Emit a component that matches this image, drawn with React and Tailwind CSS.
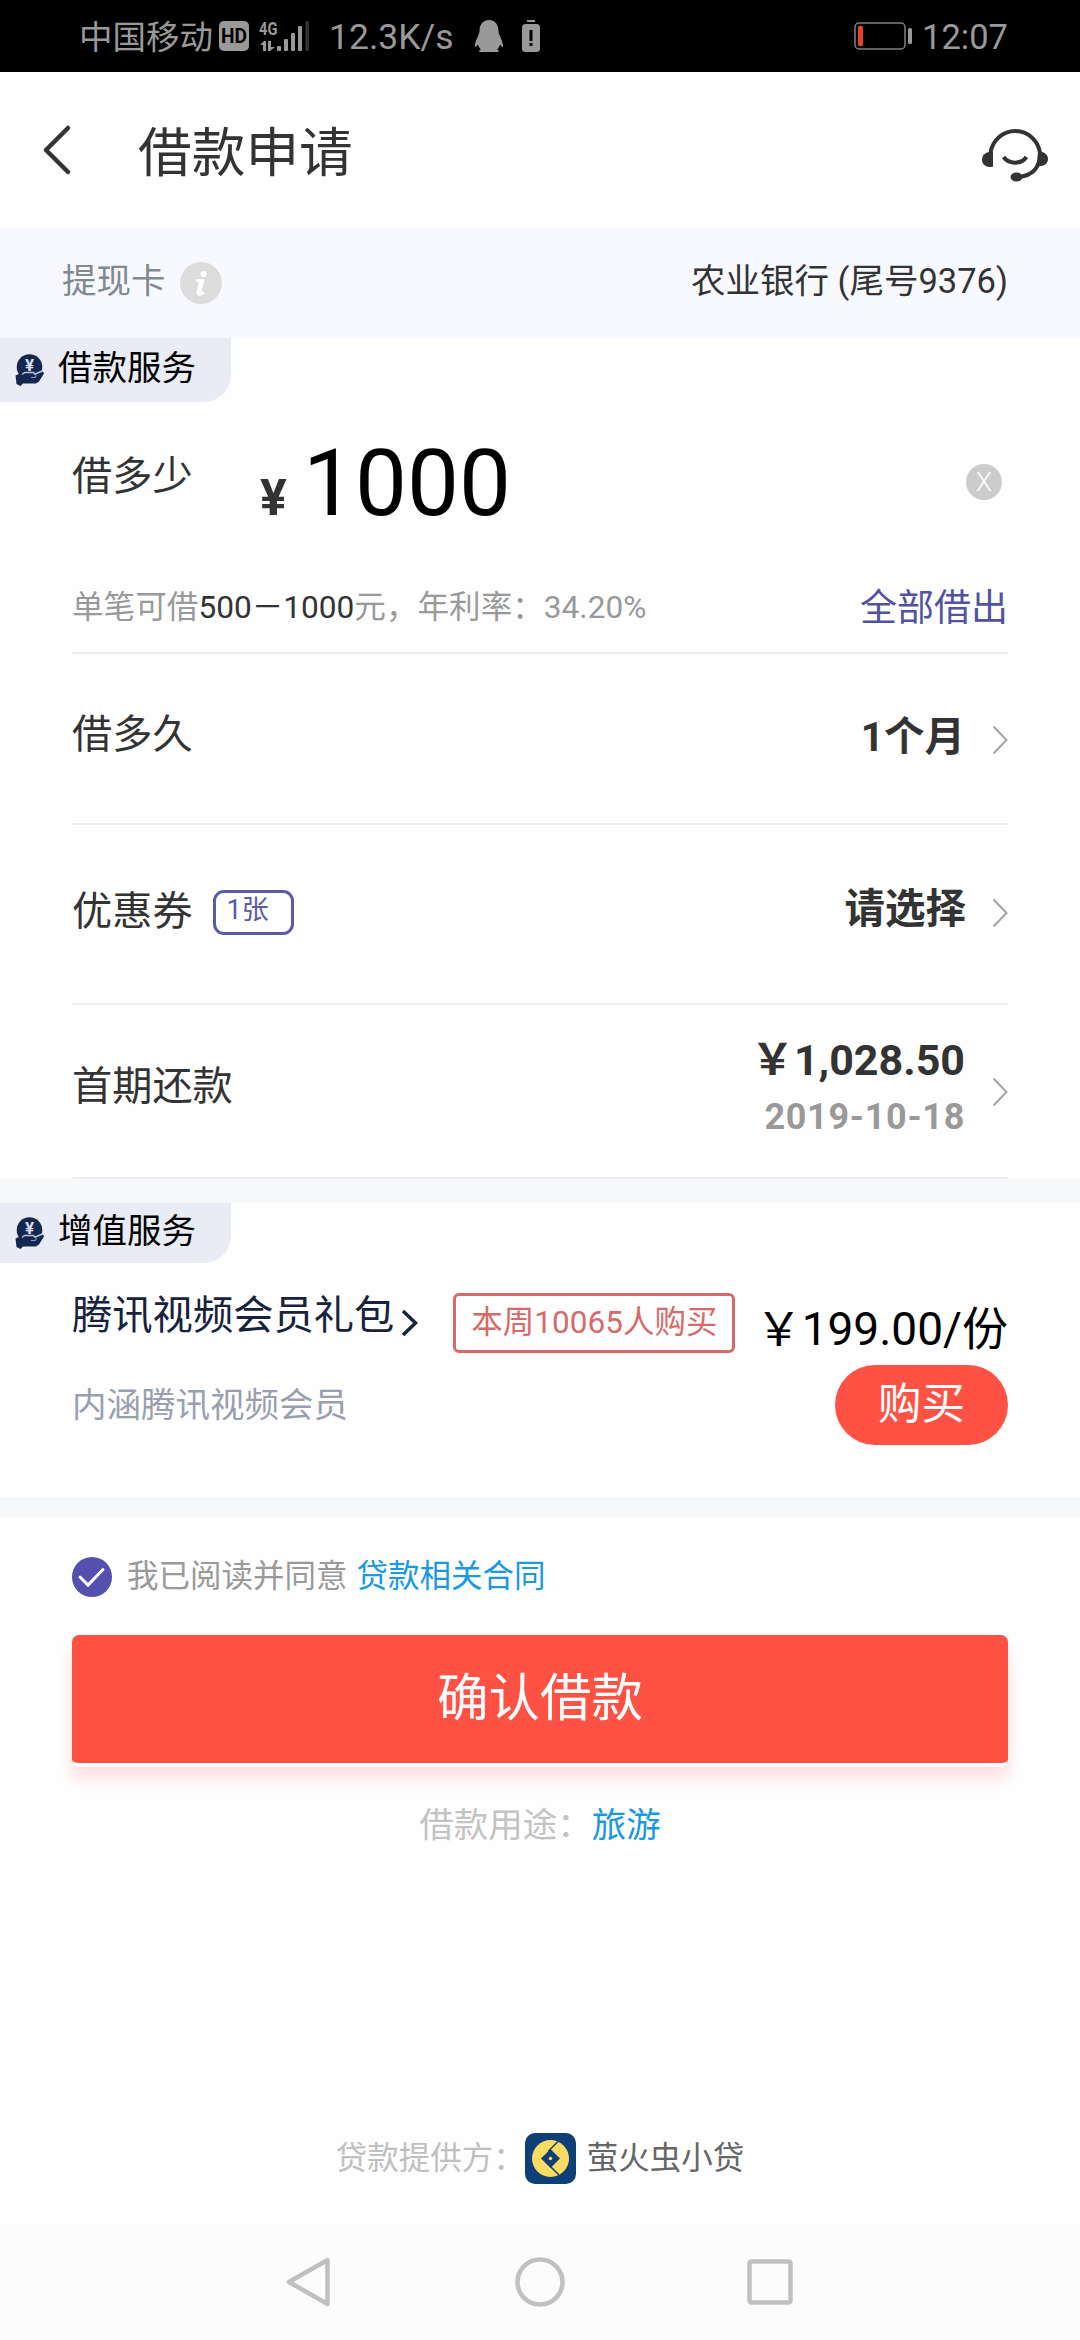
import React from "react";

function Chevron({ className = "" }) {
  return (
    <svg className={className} width="16" height="30" viewBox="0 0 16 30" fill="none">
      <path d="M1.5 1.5L14.5 15L1.5 28.5" stroke="#a3a4ab" strokeWidth="2" />
    </svg>
  );
}

function CoinHand() {
  return (
    <svg width="30" height="34" viewBox="0 0 30 34" className="shrink-0">
      <circle cx="14.500" cy="14" r="12.800" fill="#14284f" />
      <path d="M0.500 22.500L5 20.500L9 19.500L20 20L21 22L28 18.500L29 20.500L24 28.500L21 30.500H8L5.500 33L1.500 31Z" fill="#14284f" />
      <path d="M7 21.500L9.500 19.500H18.500L20 21.300L27 18" fill="none" stroke="#b9c3da" strokeWidth="1.500" strokeLinejoin="round" />
      <path d="M16 24.500H20L21.500 22.500" fill="none" stroke="#8f9cbd" strokeWidth="1.200" />
      <text x="14.500" y="17.500" textAnchor="middle" fontFamily="Roboto" fontWeight="700" fontSize="17" fill="#d8deec">¥</text>
    </svg>
  );
}

function SectionTag({ children, className = "" }) {
  return (
    <div className={"flex w-[231px] items-center rounded-br-[27px] bg-[#e9ecf5] pl-[15px] text-[34.500px] leading-none text-black " + className}>
      <CoinHand />
      <span className="mb-[3px] ml-[13px] whitespace-nowrap">{children}</span>
    </div>
  );
}

function StatusBar() {
  return (
    <div className="flex h-[72px] items-center bg-black pl-[79px] pr-[72px] text-[#999]">
      <span className="mt-[3px] w-[140px] whitespace-nowrap text-[33.500px] leading-none">中国移动</span>
      <svg width="32" height="34" viewBox="0 0 32 34">
        <rect x="0" y="2" width="30" height="30" rx="5" fill="#999" />
        <text x="15" y="24" textAnchor="middle" fontFamily="Roboto" fontWeight="700" fontSize="19.5" textLength="26" lengthAdjust="spacingAndGlyphs" fill="#000">HD</text>
      </svg>
      <svg width="54" height="36" viewBox="0 0 54 36" className="ml-2">
        <text x="0" y="17" fontFamily="Roboto" fontWeight="700" fontSize="19" textLength="18.5" lengthAdjust="spacingAndGlyphs" fill="#999">4G</text>
        <path d="M1 27L5 23H7V33H4V27ZM9 23H12V29H16L11 33H9Z" fill="#999" />
        <rect x="18" y="28" width="4" height="5" rx="1" fill="#999" />
        <rect x="25" y="21" width="4" height="12" rx="1" fill="#999" />
        <rect x="32" y="15" width="4" height="18" rx="1" fill="#999" />
        <rect x="39" y="8" width="4" height="25" rx="1" fill="#999" />
        <rect x="46.500" y="3" width="3.500" height="30" rx="1" fill="#333" />
      </svg>
      <span className="ml-[16px] mt-[3px] w-[145px] whitespace-nowrap text-[35.500px] leading-none">12.3K/s</span>
      <svg width="30" height="34" viewBox="0 0 30 34">
        <path d="M15 1C8.500 1 5.500 6 5.500 12C5.500 16 1 21 1 27C1 29 2 28 4 25.500C4.500 28 6 29.500 7 30.500C4.500 31.500 4.500 33 7 33H23C25.500 33 25.500 31.500 23 30.500C24 29.500 25.500 28 26 25.500C28 28 29 29 29 27C29 21 24.500 16 24.500 12C24.500 6 21.500 1 15 1Z" fill="#999" />
      </svg>
      <svg width="20" height="34" viewBox="0 0 20 34" className="ml-[17px]">
        <rect x="6" y="1" width="8" height="2" fill="#999" />
        <rect x="1" y="5" width="18" height="28" rx="3.500" fill="#999" />
        <rect x="8.500" y="11" width="3" height="11" fill="#000" />
        <rect x="8.500" y="24" width="3" height="3" fill="#000" />
      </svg>
      <div className="ml-auto flex items-center">
        <svg width="60" height="30" viewBox="0 0 60 30">
          <rect x="1" y="2" width="50" height="26" rx="4" fill="none" stroke="#808080" strokeWidth="1.500" />
          <rect x="4" y="5" width="5" height="20" rx="1" fill="#e8402c" />
          <rect x="54" y="7" width="4" height="16" rx="1.500" fill="#999" />
        </svg>
        <span className="ml-2 mt-[3px] text-[34.500px] leading-none">12:07</span>
      </div>
    </div>
  );
}

function Header() {
  return (
    <div className="flex h-[156px] items-center bg-white pl-[42px] pr-[31px]">
      <svg width="30" height="52" viewBox="0 0 30 52" fill="none">
        <path d="M26 4L4 26L26 48" stroke="#333" strokeWidth="4.500" strokeLinecap="round" strokeLinejoin="round" />
      </svg>
      <h1 className="ml-[66px] mt-[8px] text-[53.700px] leading-none text-[#333]">借款申请</h1>
      <svg width="68" height="58" viewBox="0 0 68 58" fill="none" className="ml-auto mt-[8px]">
        <path d="M9.500 42V28A25 25.500 0 0 1 59 28C59 42 52 51 37 52" stroke="#333" strokeWidth="4" />
        <path d="M12 27C5 26 1 30 1 35C1 40 6 43 12 41.500Z" fill="#333" />
        <path d="M57 27C63 26 67 30 67 34C67 39 62 42 56 41Z" fill="#333" />
        <ellipse cx="35.500" cy="52" rx="6" ry="4.500" fill="#333" />
        <path d="M22.500 32C28 39.500 40 39.500 45.500 32" stroke="#333" strokeWidth="4" />
      </svg>
    </div>
  );
}

function Row({ label, labelClass = "mb-[6px]", extra, children, className = "" }) {
  return (
    <div className={"mx-[72px] flex items-center border-b-2 border-[#efeff1] text-[40.500px] leading-none text-[#333] " + className}>
      <span className={"text-[40.200px] " + labelClass}>{label}</span>
      {extra}
      <div className="ml-auto flex items-center">{children}</div>
    </div>
  );
}

export default function App() {
  return (
    <div className="flex h-[2340px] w-[1080px] flex-col overflow-hidden bg-[#fefefe] font-[Roboto,'Noto_Sans_CJK_SC',sans-serif]">
      <StatusBar />
      <Header />
      <div className="flex h-[110px] items-center bg-[#f8f9fe] pl-[62px] pr-[72px] text-[34.500px] leading-none">
        <span className="mb-[3px] text-[#808890]">提现卡</span>
        <svg width="42" height="42" viewBox="0 0 42 42" className="ml-[14px]">
          <circle cx="21" cy="21" r="21" fill="#dcdcdc" />
          <circle cx="23.500" cy="12" r="3" fill="#fff" />
          <path d="M16 18.500H23L20 30Q20 32 24 30.500M20.500 19L18 29Q17 33 20 32.500Q22 32 24 30.500" fill="none" stroke="#fff" strokeWidth="2.500" />
        </svg>
        <span className="mb-[3px] ml-auto text-[#333]">农业银行 (尾号9376)</span>
      </div>

      <SectionTag className="h-[64px]">借款服务</SectionTag>
      <div className="mx-[72px] flex h-[160px] items-start leading-none text-[#333]">
        <span className="mt-[55px] w-[188px] text-[40.200px]">借多少</span>
        <div className="flex items-baseline">
          <span className="w-[43px] text-[50px] font-bold">¥</span>
          <span className="mt-[36px] text-[92.500px] text-black">1000</span>
        </div>
        <div className="ml-auto mr-[6px] mt-[62px] flex h-9 w-9 items-center justify-center rounded-full bg-[#ccc] text-[26px] font-light text-white">X</div>
      </div>
      <div className="mx-[72px] flex h-[92px] items-center border-b-2 border-[#efeff1] text-[31.600px] leading-none text-[#999]">
        <span className="mt-px">单笔可借<span className="text-[#333]">500－1000</span>元，年利率：34.20%</span>
        <span className="ml-auto mt-[2px] text-[37px] text-[#5252a4]">全部借出</span>
      </div>

      <Row label="借多久" className="h-[171px]">
        <span className="mb-[3px] font-bold">1个月</span>
        <Chevron className="ml-[27px] mt-[3px]" />
      </Row>
      <Row
        label="优惠券"
        labelClass="mb-[4px]"
        className="h-[180px]"
        extra={<span className="mb-[3px] ml-[20px] flex h-[45px] w-[81px] rounded-[11px] border-3 border-[#5a5aa8] pl-[11px] pt-[4px] text-[27px] text-[#5a5aa8]">1张</span>}
      >
        <span className="mb-[10px] font-bold">请选择</span>
        <Chevron className="mb-[3px] ml-[26px]" />
      </Row>
      <Row label="首期还款" labelClass="mb-[8px]" className="h-[174px]">
        <div className="mb-[9px] flex flex-col items-end gap-[17px] font-bold">
          <span className="text-[43px]">￥1,028.50</span>
          <span className="text-[36px] tracking-[0.700px] text-[#999]">2019-10-18</span>
        </div>
        <Chevron className="ml-[27px] mt-px" />
      </Row>

      <div className="h-[24px] bg-[#f7f8fa]" />
      <SectionTag className="h-[60px]">增值服务</SectionTag>
      <div className="flex h-[234px] items-start justify-between pl-[72px] pr-[72px] leading-none">
        <div className="flex flex-col">
          <div className="flex items-start">
            <span className="mt-[33px] text-[40.300px] text-[#17233d]">腾讯视频会员礼包</span>
            <svg width="18" height="28" viewBox="0 0 18 28" fill="none" className="ml-[7px] mt-[46px]">
              <path d="M2 2L14.500 14L2 26" stroke="#17233d" strokeWidth="3.500" />
            </svg>
            <span className="ml-[34px] mt-[30px] flex h-[60px] w-[282px] items-center justify-center whitespace-nowrap rounded-[6px] border-3 border-[#d66a6a] text-[31.500px] text-[#d66a6a]">本周10065人购买</span>
          </div>
          <span className="mt-[35px] text-[34.500px] text-[#9a9fb0]">内涵腾讯视频会员</span>
        </div>
        <div className="flex flex-col items-end">
          <span className="mt-[43px] whitespace-nowrap text-[46px] text-black">￥199.00/份</span>
          <button className="mt-[13px] flex h-[80px] w-[173px] items-center justify-center rounded-full bg-[#ff5244] text-[43.500px] text-white">购买</button>
        </div>
      </div>
      <div className="h-[21px] bg-[#f7f8fa]" />

      <div className="mx-[72px] flex h-[117px] items-center text-[31.500px] leading-none text-[#999]">
        <svg width="40" height="40" viewBox="0 0 40 40">
          <circle cx="20" cy="20" r="20" fill="#5450b0" />
          <path d="M8 20L16 28L31 12.500" fill="none" stroke="#fff" strokeWidth="3" strokeLinecap="round" />
        </svg>
        <span className="ml-[15px]">我已阅读并同意</span>
        <span className="ml-[9px] text-[#1a98e2]">贷款相关合同</span>
      </div>
      <div className="mx-[72px] rounded-[7px] shadow-[0_12px_16px_#ffdfe0]">
        <button className="flex h-[132px] w-full items-center justify-center rounded-[7px] border-b-4 border-white bg-[#ff5244] text-[51.500px] leading-none text-white">确认借款</button>
      </div>
      <div className="mt-[41px] flex justify-center text-[34.500px] leading-none">
        <span className="text-[#c3c3c3]">借款用途：</span>
        <span className="text-[#1a98e2]">旅游</span>
      </div>

      <div className="mb-[40px] mt-auto flex items-center justify-center text-[31.500px] leading-none">
        <span className="text-[#c0c0c0]">贷款提供方：</span>
        <svg width="51" height="51" viewBox="0 0 51 51">
          <rect width="51" height="51" rx="10" fill="#0e3f77" />
          <circle cx="25.500" cy="25.500" r="18.500" fill="#fbdc63" />
          <path d="M25.500 16L35 25.500L25.500 35L16 25.500Z" fill="#0e3f77" />
          <path d="M23.500 18L33 8.500M25.500 33.500L34 42" stroke="#0e3f77" strokeWidth="1.500" />
          <circle cx="25.500" cy="25.500" r="1.800" fill="#fbdc63" />
        </svg>
        <span className="ml-[11px] text-[#666]">萤火虫小贷</span>
      </div>
      <div className="flex h-[116px] items-center justify-center gap-[180px] bg-[#fcfcfc]">
        <svg width="50" height="50" viewBox="0 0 50 50" fill="none" stroke="#c0c0c0" strokeWidth="4.500" strokeLinejoin="round">
          <path d="M43.500 3L5 25L43.500 47Z" transform="translate(-1 0)" />
        </svg>
        <svg width="50" height="50" viewBox="0 0 50 50" fill="none" stroke="#c0c0c0" strokeWidth="4.500">
          <circle cx="25" cy="25" r="22.500" />
        </svg>
        <svg width="50" height="50" viewBox="0 0 50 50" fill="none" stroke="#c0c0c0" strokeWidth="4.500">
          <rect x="4.500" y="4.500" width="41" height="41" rx="2" />
        </svg>
      </div>
    </div>
  );
}
